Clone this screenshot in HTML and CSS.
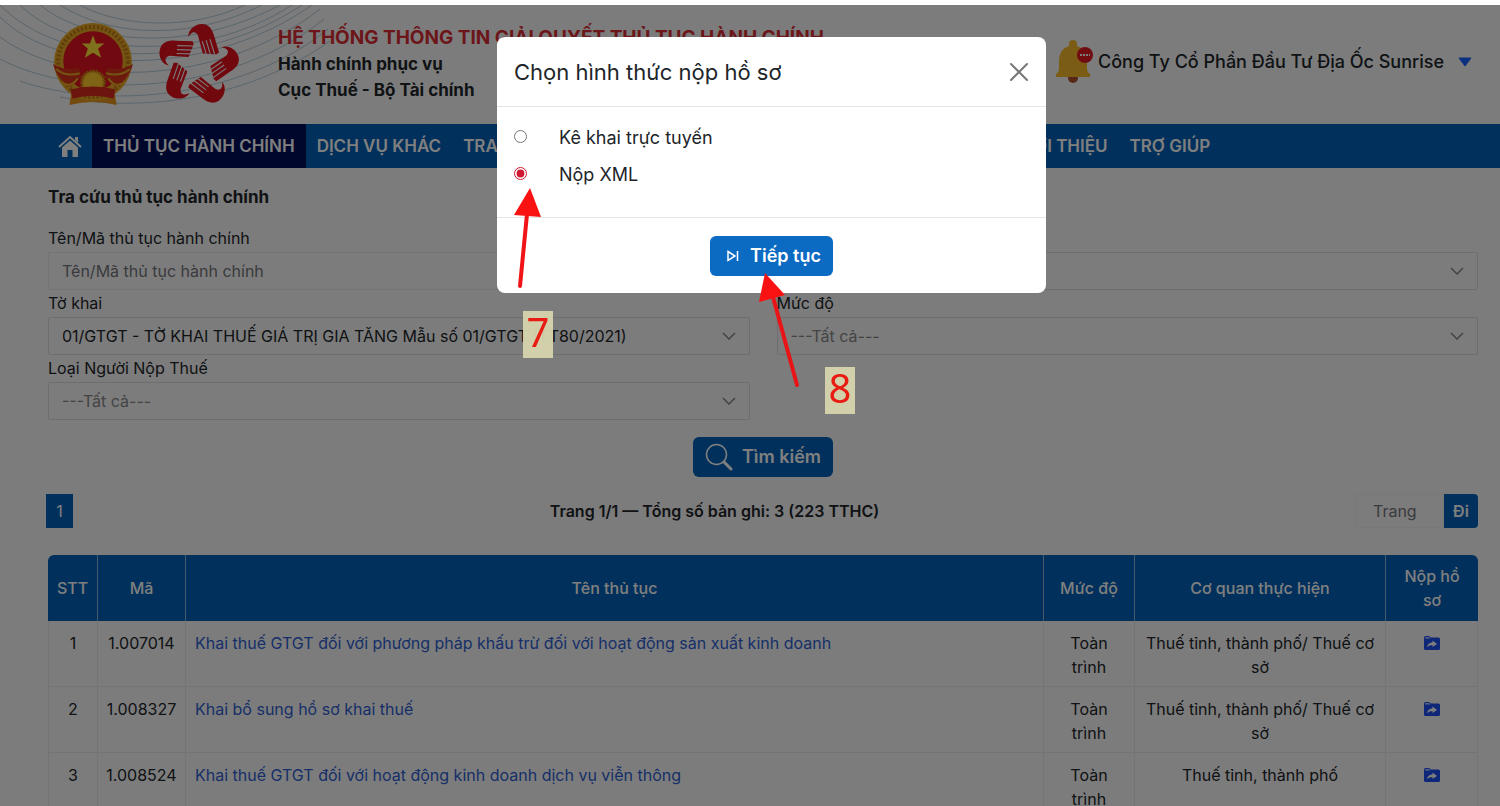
FILE: index.html
```
<!DOCTYPE html>
<html lang="vi">
<head>
    <meta charset="UTF-8">
    <meta name="viewport" content="width=device-width, initial-scale=1.0">
    <title>Tra cứu thủ tục hành chính</title>
    <link rel="stylesheet" href="styles.css">
</head>
<body>
    <svg class="symbols" aria-hidden="true">
        <symbol id="icon-folder" viewBox="0 0 18 16">
            <path d="M1 3V2.500Q1 1 2.500 1H6L8 2.500H15.500Q17 2.500 17 4V13.500Q17 15 15.500 15H2.500Q1 15 1 13.500Z" fill="#1d4ff0"/>
            <path d="M2 3.500V3Q2 2 3 2H6L7.500 3.500Z" fill="#fff" opacity=".7"/>
            <path d="M4 12Q5 7.500 9.500 7.500V5.500L14 9L9.500 12V10Q6.500 10 4 12Z" fill="#fff"/>
        </symbol>
        <symbol id="hand" viewBox="-45 -45 90 90">
            <path d="M-10 -29C-11 -36 -4 -43 4 -43C11 -43 15 -38 17 -30L22 -13L19 -11L5 -12L0 -31C-3 -36 -7 -35 -10 -29Z" fill="#e0101c"/>
            <path d="M4.500 -25L9 -10M8.500 -26L13.500 -9M12.500 -27L18 -9" stroke="#f4f4f4" stroke-width="1.200" fill="none"/>
        </symbol>
    </svg>

    <header class="header">
        <svg class="waves" viewBox="0 0 330 119" fill="none" stroke="#b4cbd8" aria-hidden="true">
            <path d="M80 0C120 22 190 26 245 0M60 0C110 32 190 36 262 0M40 0C90 40 190 48 280 0M20 0C70 50 200 60 292 0M0 0C60 62 200 68 302 0M0 12C60 72 210 72 312 0M0 32C70 84 220 82 320 4M0 54C80 96 230 90 324 14M20 76C100 104 240 96 328 24M60 92C130 106 240 100 330 36"/>
        </svg>
        <div class="brand">
            <svg class="emblem" viewBox="0 0 80 84" role="img" aria-label="Quốc huy">
                <path d="M19 68L61 68L63 81Q40 75 17 81Z" fill="#e8961c"/>
                <circle cx="40" cy="39" r="38" fill="#e8a824"/>
                <circle cx="40" cy="39" r="34" fill="none" stroke="#c07a14" stroke-width="4" stroke-dasharray="2 2"/>
                <circle cx="40" cy="38" r="29" fill="#e01420"/>
                <path d="M40 13L43 21H51L45 26L48 35L40 30L32 35L35 26L29 21H37Z" fill="#ffe23c"/>
                <path d="M1 41Q12 48 26 45L29 54L18 63Q6 58 1 41ZM79 41Q68 48 54 45L51 54L62 63Q74 58 79 41Z" fill="#d8341c"/>
                <path d="M4 46Q14 54 27 50M76 46Q66 54 53 50M8 58Q18 66 25 55M72 58Q62 66 55 55" stroke="#e8a824" stroke-width="2" fill="none"/>
                <circle cx="40" cy="59" r="11" fill="#ffc82c" stroke="#d08a14" stroke-width="3" stroke-dasharray="2 1"/>
                <path d="M18 66Q40 60 62 66L60 75Q40 69 20 75Z" fill="#d8281c"/>
            </svg>
            <svg class="star-logo" viewBox="-45 -45 90 90" role="img" aria-label="Dịch vụ công">
                <use href="#hand" x="-45" y="-45" width="90" height="90"/>
                <use href="#hand" x="-45" y="-45" width="90" height="90" transform="rotate(72)"/>
                <use href="#hand" x="-45" y="-45" width="90" height="90" transform="rotate(144)"/>
                <use href="#hand" x="-45" y="-45" width="90" height="90" transform="rotate(216)"/>
                <use href="#hand" x="-45" y="-45" width="90" height="90" transform="rotate(288)"/>
            </svg>
            <div class="brand-text">
                <p class="brand-title">HỆ THỐNG THÔNG TIN GIẢI QUYẾT THỦ TỤC HÀNH CHÍNH</p>
                <p>Hành chính phục vụ</p>
                <p>Cục Thuế - Bộ Tài chính</p>
            </div>
        </div>
        <div class="account">
            <svg class="bell" viewBox="0 0 38 44" role="img" aria-label="Thông báo">
                <circle cx="17" cy="38" r="5" fill="#b0502c"/>
                <path d="M13 4Q13 0 17 0Q21 0 21 4V6Q31 9 31 21V29Q31 32 34 34V37H0V34Q3 32 3 29V21Q3 9 13 6Z" fill="#f7b928"/>
                <circle cx="29" cy="15" r="8" fill="#e31b23"/>
                <path d="M24 15H34" stroke="#fff" stroke-width="2" stroke-dasharray="2 1"/>
            </svg>
            <button type="button" class="account-button">Công Ty Cổ Phần Đầu Tư Địa Ốc Sunrise
                <svg width="14" height="10" viewBox="0 0 14 10" aria-hidden="true"><path d="M1 1H13L7 9Z" fill="#1560ff" stroke="#1560ff" stroke-linejoin="round"/></svg>
            </button>
        </div>
    </header>

    <nav class="nav">
        <a href="#" class="home" aria-label="Trang chủ">
            <svg width="24" height="24" viewBox="0 0 24 24" aria-hidden="true">
                <path d="M1 13L12 3L23 13" fill="none" stroke="#fff" stroke-width="2"/>
                <path d="M17 3H20V9L17 6Z" fill="#fff"/>
                <path d="M4 13.500L12 6.500L20 13.500V23H14.500V16H9.500V23H4Z" fill="#fff"/>
            </svg>
        </a>
        <a href="#" class="active">THỦ TỤC HÀNH CHÍNH</a>
        <a href="#">DỊCH VỤ KHÁC</a>
        <a href="#">TRA CỨU</a>
        <a href="#">THANH TOÁN TRỰC TUYẾN</a>
        <a href="#">THỐNG KÊ</a>
        <a href="#">HỎI ĐÁP</a>
        <a href="#">GIỚI THIỆU</a>
        <a href="#">TRỢ GIÚP</a>
    </nav>

    <main class="content">
        <h1>Tra cứu thủ tục hành chính</h1>
        <form class="search">
            <div class="fields">
                <div class="field">
                    <label for="name">Tên/Mã thủ tục hành chính</label>
                    <input type="text" id="name" placeholder="Tên/Mã thủ tục hành chính">
                </div>
                <div class="field">
                    <label for="agency">Cơ quan thực hiện</label>
                    <select id="agency" class="empty"><option>---Tất cả---</option></select>
                </div>
                <div class="field">
                    <label for="declaration">Tờ khai</label>
                    <select id="declaration"><option>01/GTGT - TỜ KHAI THUẾ GIÁ TRỊ GIA TĂNG Mẫu số 01/GTGT (TT80/2021)</option></select>
                </div>
                <div class="field">
                    <label for="level">Mức độ</label>
                    <select id="level" class="empty"><option>---Tất cả---</option></select>
                </div>
                <div class="field">
                    <label for="taxpayer">Loại Người Nộp Thuế</label>
                    <select id="taxpayer" class="empty"><option>---Tất cả---</option></select>
                </div>
            </div>
            <button type="button" class="button">
                <svg width="28" height="28" viewBox="0 0 28 28" fill="none" stroke="#fff" aria-hidden="true"><circle cx="11.500" cy="11.500" r="10" stroke-width="1.500"/><path d="M19 19L26 26" stroke-width="3" stroke-linecap="round"/></svg>
                Tìm kiếm
            </button>
        </form>

        <div class="pager">
            <button type="button" class="page">1</button>
            <p>Trang 1/1 — Tổng số bản ghi: 3 (223 TTHC)</p>
            <form class="goto">
                <input type="text" placeholder="Trang" aria-label="Trang">
                <button type="button">Đi</button>
            </form>
        </div>

        <table class="results">
            <colgroup>
                <col class="col-index"><col class="col-code"><col><col class="col-level"><col class="col-agency"><col class="col-submit">
            </colgroup>
            <thead>
                <tr><th>STT</th><th>Mã</th><th>Tên thủ tục</th><th>Mức độ</th><th>Cơ quan thực hiện</th><th>Nộp hồ sơ</th></tr>
            </thead>
            <tbody>
                <tr>
                    <td>1</td><td>1.007014</td>
                    <td class="name"><a href="#">Khai thuế GTGT đối với phương pháp khấu trừ đối với hoạt động sản xuất kinh doanh</a></td>
                    <td>Toàn trình</td><td>Thuế tỉnh, thành phố/ Thuế cơ sở</td>
                    <td><a href="#" aria-label="Nộp hồ sơ"><svg width="18" height="16"><use href="#icon-folder"/></svg></a></td>
                </tr>
                <tr>
                    <td>2</td><td>1.008327</td>
                    <td class="name"><a href="#">Khai bổ sung hồ sơ khai thuế</a></td>
                    <td>Toàn trình</td><td>Thuế tỉnh, thành phố/ Thuế cơ sở</td>
                    <td><a href="#" aria-label="Nộp hồ sơ"><svg width="18" height="16"><use href="#icon-folder"/></svg></a></td>
                </tr>
                <tr>
                    <td>3</td><td>1.008524</td>
                    <td class="name"><a href="#">Khai thuế GTGT đối với hoạt động kinh doanh dịch vụ viễn thông</a></td>
                    <td>Toàn trình</td><td>Thuế tỉnh, thành phố</td>
                    <td><a href="#" aria-label="Nộp hồ sơ"><svg width="18" height="16"><use href="#icon-folder"/></svg></a></td>
                </tr>
            </tbody>
        </table>
    </main>

    <div class="backdrop">
        <div class="modal" role="dialog" aria-labelledby="modal-title">
            <div class="modal-header">
                <h2 id="modal-title">Chọn hình thức nộp hồ sơ</h2>
                <button type="button" class="close" aria-label="Đóng">
                    <svg width="20" height="20" viewBox="0 0 20 20" aria-hidden="true"><path d="M2 2L18 18M18 2L2 18" stroke="#777" stroke-width="2" stroke-linecap="round"/></svg>
                </button>
            </div>
            <div class="modal-body">
                <label><input type="radio" name="method"> Kê khai trực tuyến</label>
                <label><input type="radio" name="method" checked> Nộp XML</label>
            </div>
            <div class="modal-footer">
                <button type="button" class="button">
                    <svg class="next" width="12" height="12" viewBox="0 0 12 12" fill="none" stroke="#fff" stroke-width="1.500" aria-hidden="true"><path d="M1 1.500L8 6L1 10.500ZM10.500 1V11"/></svg>
                    Tiếp tục
                </button>
            </div>
        </div>
    </div>

    <!-- Step markers -->
    <svg class="arrow arrow-7" viewBox="0 0 30 102" aria-hidden="true">
        <path d="M8 98L15 26" stroke="#f01418" stroke-width="4" stroke-linecap="round"/>
        <path d="M18 0L2 27L29 29Z" fill="#fa1212"/>
    </svg>
    <svg class="arrow arrow-8" viewBox="0 0 44 116" aria-hidden="true">
        <path d="M39 112L15 24" stroke="#e81418" stroke-width="4" stroke-linecap="round"/>
        <path d="M7 0L1 29L27 22Z" fill="#fa1212"/>
    </svg>
    <div class="step step-7">7</div>
    <div class="step step-8">8</div>
</body>
</html>
```

FILE: styles.css
```
:root {
    --blue: #0060b6;
    --button: #0b6ac2;
    --page: #f9f9f9;
    --line: #dcdcdc;
    --line-light: #e8e8e8;
    --text: #212529;
}

* {
    box-sizing: border-box;
}

body {
    margin: 0;
    padding-top: 5px;
    height: 100vh;
    overflow: hidden;
    font-family: Inter, "Noto Sans", sans-serif;
    font-size: 16px;
    line-height: 24px;
    color: var(--text);
    background: #fff;
}

button, input, select {
    font: inherit;
}

h1, h2, p {
    margin: 0;
}

a {
    color: inherit;
    text-decoration: none;
}

.symbols {
    position: absolute;
    width: 0;
    height: 0;
}

.header {
    position: relative;
    display: flex;
    justify-content: space-between;
    align-items: flex-start;
    height: 119px;
    padding: 16px 28px 0 52px;
    background: var(--page);
}

.waves {
    position: absolute;
    top: 0;
    left: 0;
    width: 330px;
    height: 119px;
}

.brand {
    position: relative;
    display: flex;
}

.emblem {
    width: 82px;
    height: 88px;
}

.star-logo {
    width: 86px;
    height: 88px;
    margin-left: 21px;
}

.brand-text {
    padding: 4px 0 0 37px;
    font-size: 17px;
    font-weight: 700;
    line-height: 26px;
    white-space: nowrap;
}

.brand-text .brand-title {
    font-size: 19px;
    color: #d82c34;
}

.account {
    display: flex;
    align-items: center;
    gap: 4px;
    padding-top: 19px;
}

.bell {
    width: 38px;
    height: 44px;
}

.account-button {
    display: flex;
    align-items: center;
    gap: 14px;
    padding: 0;
    border: 0;
    background: none;
    font-size: 18px;
    font-weight: 500;
    color: var(--text);
}

.nav {
    display: flex;
    height: 44px;
    padding-left: 48px;
    background: var(--blue);
}

.nav a {
    display: flex;
    align-items: center;
    padding: 0 11px;
    font-size: 17px;
    font-weight: 600;
    color: #fff;
    white-space: nowrap;
}

.nav .home {
    padding: 0 10px;
}

.nav .active {
    background: #000f5a;
}

.content {
    padding: 17px 22px 0 48px;
    background: var(--page);
}

h1 {
    font-size: 17px;
    font-weight: 700;
    margin-bottom: 16px;
}

.search {
    text-align: center;
}

.fields {
    display: grid;
    grid-template-columns: 1fr 1fr;
    column-gap: 27px;
    margin-bottom: 17px;
    text-align: left;
}

.field label {
    display: block;
    line-height: 27px;
}

.field input,
.field select {
    display: block;
    width: 100%;
    height: 38px;
    padding: 0 13px;
    border: 1px solid var(--line);
    border-radius: 2px;
    background-color: transparent;
    color: var(--text);
}

.field input {
    border-color: var(--line-light);
}

.field select {
    appearance: none;
    background-image: url("data:image/svg+xml,%3Csvg xmlns='http://www.w3.org/2000/svg' width='14' height='8' fill='none' stroke='%23888' stroke-width='1.5'%3E%3Cpath d='M1 1l6 6 6-6'/%3E%3C/svg%3E");
    background-repeat: no-repeat;
    background-position: right 13px center;
}

.field .empty {
    color: #888;
}

::placeholder {
    color: #74777c;
    opacity: 1;
}

.button {
    display: inline-flex;
    align-items: center;
    gap: 9px;
    height: 40px;
    padding: 0 12px;
    border: 0;
    border-radius: 6px;
    background: var(--button);
    font-size: 18px;
    font-weight: 600;
    color: #fff;
}

.search .button {
    background: var(--blue);
}

.pager {
    display: flex;
    justify-content: space-between;
    align-items: center;
    height: 34px;
    margin: 17px 0 27px -2px;
}

.pager p {
    font-weight: 600;
}

.page {
    width: 27px;
    height: 34px;
    padding: 0;
    border: 0;
    background: var(--blue);
    color: #fff;
}

.goto {
    display: flex;
}

.goto input {
    width: 88px;
    height: 34px;
    padding: 0 16px;
    border: 1px solid #f0f0f0;
    background: none;
}

.goto button {
    width: 34px;
    padding: 0;
    border: 0;
    border-radius: 0 4px 4px 0;
    background: var(--blue);
    font-weight: 600;
    color: #fff;
}

.results {
    width: 100%;
    table-layout: fixed;
    border-spacing: 0;
    text-align: center;
}

.col-index {
    width: 50px;
}

.col-code {
    width: 88px;
}

.col-level {
    width: 91px;
}

.col-agency {
    width: 251px;
}

.col-submit {
    width: 92px;
}

.results th {
    height: 66px;
    padding: 8px;
    border-right: 1px solid #8fb5d8;
    background: var(--blue);
    font-weight: 500;
    color: #fff;
}

.results th:first-child {
    border-top-left-radius: 6px;
}

.results th:last-child {
    border-right: 0;
    border-top-right-radius: 6px;
}

.results td {
    height: 66px;
    padding: 10px 8px 7px;
    border-right: 1px solid var(--line-light);
    border-bottom: 1px solid var(--line-light);
    vertical-align: top;
}

.results td:first-child {
    border-left: 1px solid var(--line-light);
}

.results .name {
    padding-left: 9px;
    text-align: left;
    color: #2f5fd0;
}

.results svg {
    vertical-align: -2px;
}

.backdrop {
    position: fixed;
    inset: 5px 0 0;
    display: flex;
    justify-content: center;
    align-items: flex-start;
    padding: 32px 0 0 43px;
    background: rgba(0, 0, 0, .5);
}

.modal {
    width: 549px;
    border-radius: 8px;
    background: #fff;
}

.modal-header {
    display: flex;
    justify-content: space-between;
    align-items: center;
    height: 70px;
    padding: 0 17px;
    border-bottom: 1px solid #e4e4e4;
}

.modal-header h2 {
    font-size: 22px;
    font-weight: 400;
}

.close {
    display: flex;
    padding: 0;
    border: 0;
    background: none;
}

.modal-body {
    display: grid;
    gap: 13px;
    padding: 19px 17px 30px;
    font-size: 18px;
}

.modal-body label {
    display: flex;
    align-items: center;
}

.modal-body input {
    width: 13px;
    height: 13px;
    margin: 0 32px 3px 0;
    accent-color: #d01830;
}

.modal-footer {
    padding: 18px 0 17px;
    border-top: 1px solid #e4e4e4;
    text-align: center;
}

.modal-footer .button {
    padding: 0 12px 0 17px;
    gap: 11px;
    vertical-align: top;
}

.arrow {
    position: absolute;
}

.arrow-7 {
    left: 512px;
    top: 188px;
    width: 30px;
    height: 102px;
}

.arrow-8 {
    left: 758px;
    top: 273px;
    width: 44px;
    height: 116px;
}

.step {
    position: absolute;
    width: 30px;
    height: 47px;
    background: rgba(212, 211, 172, .96);
    font-family: "Noto Sans", sans-serif;
    font-size: 40px;
    line-height: 42px;
    text-align: center;
    color: #e81c12;
}

.step-7 {
    left: 523px;
    top: 311px;
}

.step-8 {
    left: 825px;
    top: 367px;
}
```
